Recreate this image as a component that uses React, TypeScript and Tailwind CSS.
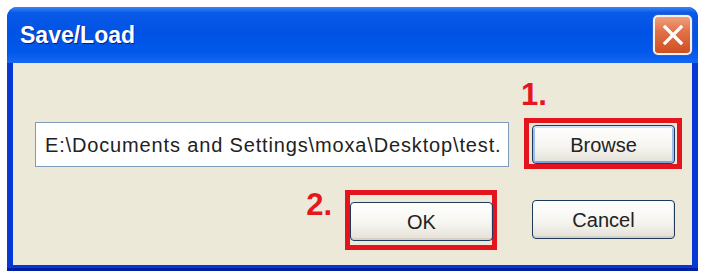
const ui = { fontFamily: '"Liberation Sans", Arial, sans-serif' };

const CloseButton = () => (
  <div className="w-[39px] h-[40px] rounded-[5px] border-[2px] border-[#f4f1ee] bg-[linear-gradient(180deg,#efa07c_0%,#e27148_40%,#cf4f22_100%)] flex items-center justify-center shadow-[0_0_0_1px_#2a5fd8]">
    <svg width="22" height="22" viewBox="0 0 22 22">
      <path d="M3 3 L19 19 M19 3 L3 19" stroke="#ffffff" strokeWidth="3.2" strokeLinecap="square" />
    </svg>
  </div>
);

const XpButton = ({ text, focused = false }: { text: string; focused?: boolean }) => (
  <button
    style={ui}
    className={
      "w-[143px] h-[39px] rounded-[4px] border border-[#1d3a5c] text-[20px] text-[#222] bg-[linear-gradient(180deg,#ffffff_0%,#f6f5f0_55%,#e3e0d6_100%)] " +
      (focused
        ? "shadow-[inset_0_2px_0_#cee3fc,inset_2px_0_0_#9bbdf0,inset_-2px_0_0_#9bbdf0,inset_0_-2px_0_#7aa2e6]"
        : "shadow-[inset_0_-2px_0_#d6d0c5,inset_-1px_0_0_#e2ded4]")
    }
  >
    {text}
  </button>
);

export default function App() {
  return (
    <div className="w-[704px] h-[273px] bg-white pt-[7px] pl-[7px]">
      <div className="w-[691px] h-[264px] flex flex-col rounded-t-[10px] bg-[#0838d4] shadow-[inset_0_-3px_0_#001ea0]">
        <div className="h-[56px] rounded-t-[10px] bg-[linear-gradient(180deg,#3b86f5_0%,#0a5ae8_10%,#0053e4_45%,#0058ea_80%,#1766f2_100%)] flex items-center justify-between pl-[13px] pr-[6px]">
          <span
            style={ui}
            className="text-[23px] font-bold text-white leading-none [text-shadow:1px_1px_0_#0b1f8c]"
          >
            Save/Load
          </span>
          <CloseButton />
        </div>
        <div className="flex-1 mx-[6px] mb-[6px] bg-[#ece9d8] pl-[22px]">
          <div className="grid grid-cols-[474px_158px] gap-x-[15px]">
            <div className="h-[55px]" />
            <div className="h-[55px] flex items-end pb-[8px]">
              <span style={ui} className="-ml-[3px] text-[31px] font-bold leading-none text-[#e4161e]">
                1.
              </span>
            </div>

            <div className="pt-[4px]">
              <div
                style={ui}
                className="h-[45px] border border-[#7f9db9] bg-white flex items-center pl-[9px] text-[20px] tracking-[0.85px] text-[#222] whitespace-nowrap overflow-hidden"
              >
                E:\Documents and Settings\moxa\Desktop\test.
              </div>
            </div>
            <div className="h-[51px] border-[5px] border-[#e3141c] pt-[2px] pl-[3px]">
              <XpButton text="Browse" focused />
            </div>

            <div className="mt-[21px] flex justify-end items-start pr-[12px] gap-[13px]">
              <span style={ui} className="-mt-[1px] text-[31px] font-bold leading-none text-[#e4161e]">
                2.
              </span>
              <div className="w-[152px] h-[60px] border-[5px] border-[#e3141c] pt-[7px]">
                <XpButton text="OK" />
              </div>
            </div>
            <div className="mt-[31px] pl-[8px]">
              <XpButton text="Cancel" />
            </div>
          </div>
        </div>
      </div>
    </div>
  );
}
